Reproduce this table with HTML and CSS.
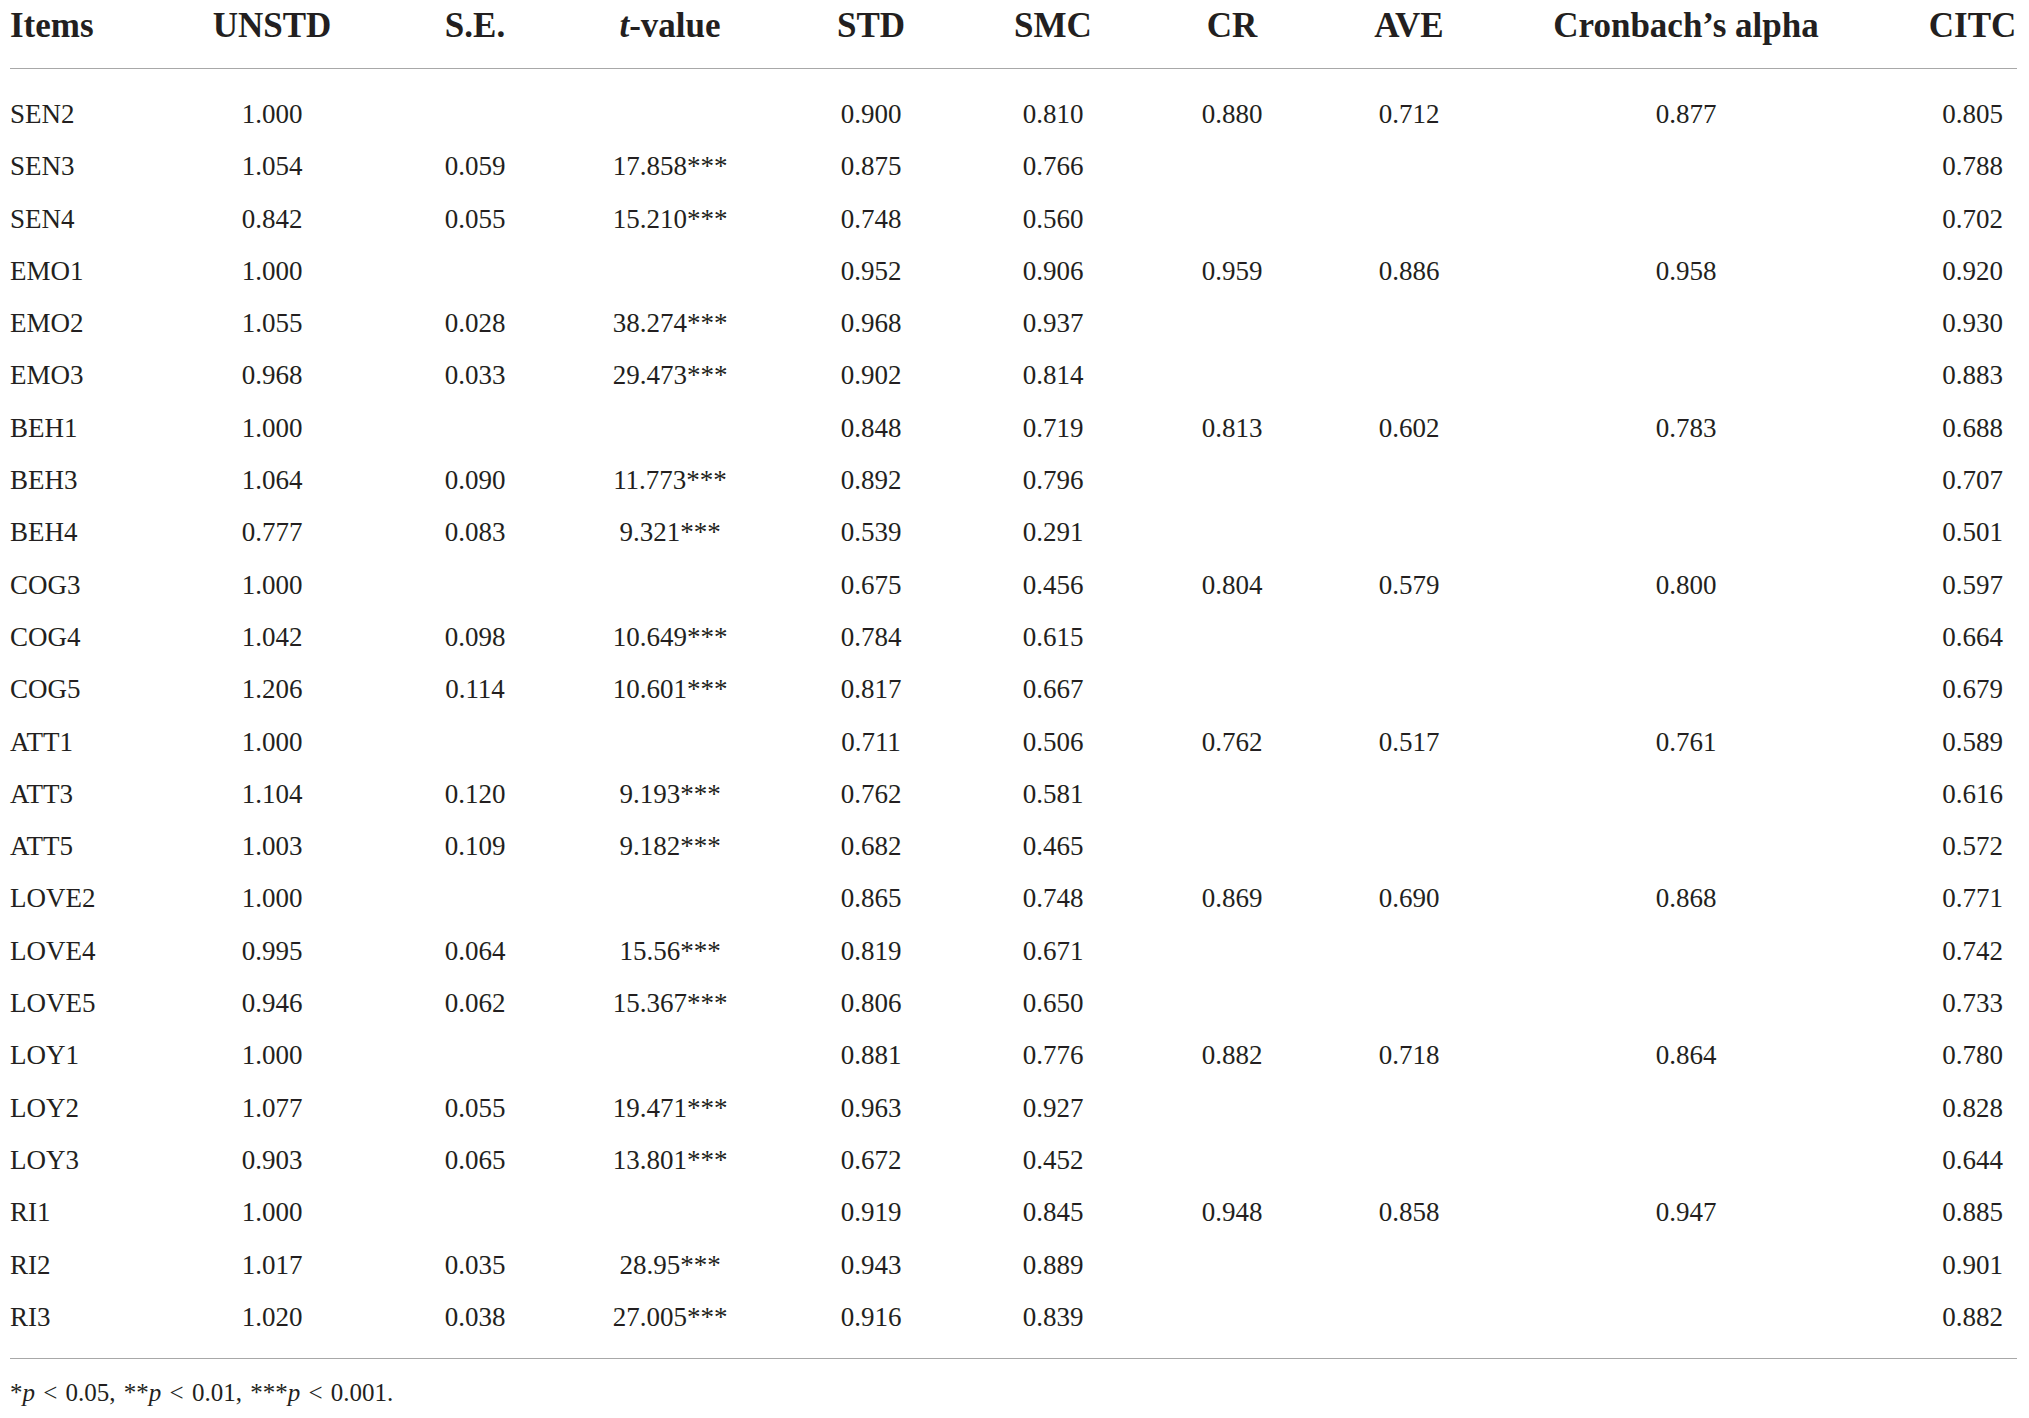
FILE: index.html
```html
<!DOCTYPE html>
<html lang="en">
<head>
    <meta charset="UTF-8">
    <title>Measurement model results</title>
    <link rel="stylesheet" href="styles.css">
</head>
<body>

<div class="wrap">
    <table class="results">
        <colgroup>
            <col class="c-item">
            <col class="c-unstd">
            <col class="c-se">
            <col class="c-t">
            <col class="c-std">
            <col class="c-smc">
            <col class="c-cr">
            <col class="c-ave">
            <col class="c-alpha">
            <col class="c-citc">
        </colgroup>
        <thead>
            <tr>
                <th>Items</th>
                <th>UNSTD</th>
                <th>S.E.</th>
                <th><i>t</i>-value</th>
                <th>STD</th>
                <th>SMC</th>
                <th>CR</th>
                <th>AVE</th>
                <th>Cronbach’s alpha</th>
                <th class="last">CITC</th>
            </tr>
        </thead>
        <tbody>
            <tr><td>SEN2</td><td>1.000</td><td></td><td></td><td>0.900</td><td>0.810</td><td>0.880</td><td>0.712</td><td>0.877</td><td class="last">0.805</td></tr>
            <tr><td>SEN3</td><td>1.054</td><td>0.059</td><td>17.858***</td><td>0.875</td><td>0.766</td><td></td><td></td><td></td><td class="last">0.788</td></tr>
            <tr><td>SEN4</td><td>0.842</td><td>0.055</td><td>15.210***</td><td>0.748</td><td>0.560</td><td></td><td></td><td></td><td class="last">0.702</td></tr>
            <tr><td>EMO1</td><td>1.000</td><td></td><td></td><td>0.952</td><td>0.906</td><td>0.959</td><td>0.886</td><td>0.958</td><td class="last">0.920</td></tr>
            <tr><td>EMO2</td><td>1.055</td><td>0.028</td><td>38.274***</td><td>0.968</td><td>0.937</td><td></td><td></td><td></td><td class="last">0.930</td></tr>
            <tr><td>EMO3</td><td>0.968</td><td>0.033</td><td>29.473***</td><td>0.902</td><td>0.814</td><td></td><td></td><td></td><td class="last">0.883</td></tr>
            <tr><td>BEH1</td><td>1.000</td><td></td><td></td><td>0.848</td><td>0.719</td><td>0.813</td><td>0.602</td><td>0.783</td><td class="last">0.688</td></tr>
            <tr><td>BEH3</td><td>1.064</td><td>0.090</td><td>11.773***</td><td>0.892</td><td>0.796</td><td></td><td></td><td></td><td class="last">0.707</td></tr>
            <tr><td>BEH4</td><td>0.777</td><td>0.083</td><td>9.321***</td><td>0.539</td><td>0.291</td><td></td><td></td><td></td><td class="last">0.501</td></tr>
            <tr><td>COG3</td><td>1.000</td><td></td><td></td><td>0.675</td><td>0.456</td><td>0.804</td><td>0.579</td><td>0.800</td><td class="last">0.597</td></tr>
            <tr><td>COG4</td><td>1.042</td><td>0.098</td><td>10.649***</td><td>0.784</td><td>0.615</td><td></td><td></td><td></td><td class="last">0.664</td></tr>
            <tr><td>COG5</td><td>1.206</td><td>0.114</td><td>10.601***</td><td>0.817</td><td>0.667</td><td></td><td></td><td></td><td class="last">0.679</td></tr>
            <tr><td>ATT1</td><td>1.000</td><td></td><td></td><td>0.711</td><td>0.506</td><td>0.762</td><td>0.517</td><td>0.761</td><td class="last">0.589</td></tr>
            <tr><td>ATT3</td><td>1.104</td><td>0.120</td><td>9.193***</td><td>0.762</td><td>0.581</td><td></td><td></td><td></td><td class="last">0.616</td></tr>
            <tr><td>ATT5</td><td>1.003</td><td>0.109</td><td>9.182***</td><td>0.682</td><td>0.465</td><td></td><td></td><td></td><td class="last">0.572</td></tr>
            <tr><td>LOVE2</td><td>1.000</td><td></td><td></td><td>0.865</td><td>0.748</td><td>0.869</td><td>0.690</td><td>0.868</td><td class="last">0.771</td></tr>
            <tr><td>LOVE4</td><td>0.995</td><td>0.064</td><td>15.56***</td><td>0.819</td><td>0.671</td><td></td><td></td><td></td><td class="last">0.742</td></tr>
            <tr><td>LOVE5</td><td>0.946</td><td>0.062</td><td>15.367***</td><td>0.806</td><td>0.650</td><td></td><td></td><td></td><td class="last">0.733</td></tr>
            <tr><td>LOY1</td><td>1.000</td><td></td><td></td><td>0.881</td><td>0.776</td><td>0.882</td><td>0.718</td><td>0.864</td><td class="last">0.780</td></tr>
            <tr><td>LOY2</td><td>1.077</td><td>0.055</td><td>19.471***</td><td>0.963</td><td>0.927</td><td></td><td></td><td></td><td class="last">0.828</td></tr>
            <tr><td>LOY3</td><td>0.903</td><td>0.065</td><td>13.801***</td><td>0.672</td><td>0.452</td><td></td><td></td><td></td><td class="last">0.644</td></tr>
            <tr><td>RI1</td><td>1.000</td><td></td><td></td><td>0.919</td><td>0.845</td><td>0.948</td><td>0.858</td><td>0.947</td><td class="last">0.885</td></tr>
            <tr><td>RI2</td><td>1.017</td><td>0.035</td><td>28.95***</td><td>0.943</td><td>0.889</td><td></td><td></td><td></td><td class="last">0.901</td></tr>
            <tr><td>RI3</td><td>1.020</td><td>0.038</td><td>27.005***</td><td>0.916</td><td>0.839</td><td></td><td></td><td></td><td class="last">0.882</td></tr>
        </tbody>
    </table>
    <p class="note">*<i>p</i> &lt; 0.05, **<i>p</i> &lt; 0.01, ***<i>p</i> &lt; 0.001.</p>
</div>

</body>
</html>
```

FILE: styles.css
```css
body {
    margin: 0;
    background: #fff;
    color: #231f20;
    font-family: "Liberation Serif", "Times New Roman", serif;
}
.wrap {
    padding: 0 12px 0 10px;
}
.results {
    width: 2007px;
    table-layout: fixed;
    border-collapse: collapse;
}
.c-item { width: 160px; }
.c-unstd { width: 204px; }
.c-se { width: 202px; }
.c-t { width: 188px; }
.c-std { width: 214px; }
.c-smc { width: 150px; }
.c-cr { width: 208px; }
.c-ave { width: 146px; }
.c-alpha { width: 408px; }
.c-citc { width: 127px; }

.results th,
.results td {
    padding: 0;
    text-align: center;
    white-space: nowrap;
}
.results th:first-child,
.results td:first-child {
    text-align: left;
}
.results .last {
    padding-left: 38px;
}
.results thead th {
    font-size: 35px;
    font-weight: bold;
    line-height: 40px;
    padding-top: 6px;
    padding-bottom: 22px;
    border-bottom: 1px solid #a8a8a8;
}
.results tbody td {
    font-size: 27px;
    line-height: 52.3px;
}
.results tbody tr:first-child td {
    padding-top: 19px;
}
.results tbody tr:last-child td {
    padding-bottom: 15px;
    border-bottom: 1px solid #a8a8a8;
}
.note {
    margin: 19px 0 0;
    font-size: 25px;
    line-height: 30px;
    word-spacing: 2px;
}
```
